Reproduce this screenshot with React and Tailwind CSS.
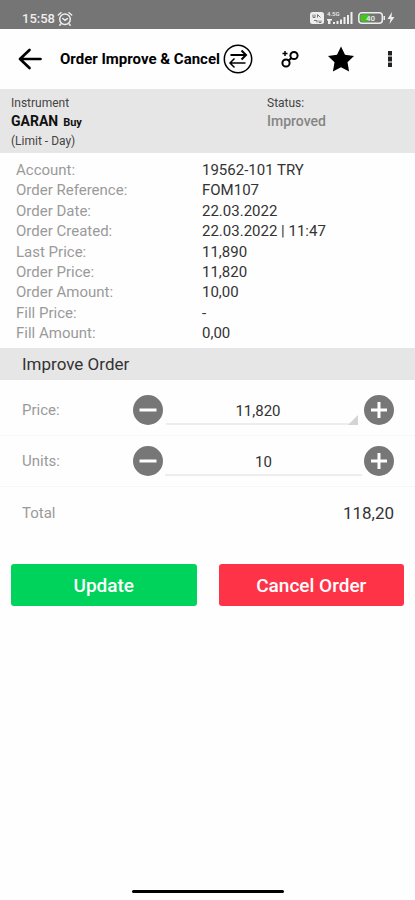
import { useState } from 'react';

const details = [
  ['Account:', '19562-101 TRY'],
  ['Order Reference:', 'FOM107'],
  ['Order Date:', '22.03.2022'],
  ['Order Created:', '22.03.2022 | 11:47'],
  ['Last Price:', '11,890'],
  ['Order Price:', '11,820'],
  ['Order Amount:', '10,00'],
  ['Fill Price:', '-'],
  ['Fill Amount:', '0,00'],
];

function StatusBar() {
  return (
    <div className="flex h-[29px] items-center justify-between bg-[#757575] pt-2 pr-5 pl-[22px] text-white">
      <div className="flex items-center gap-[2px] text-[13px] leading-4 font-medium text-[#eeeeee]">
        <span>15:58</span>
        <svg className="h-4 w-4" viewBox="0 0 16 16" fill="none" stroke="#eeeeee" strokeWidth="1.5" strokeLinecap="round" aria-hidden="true">
          <circle cx="8" cy="8.3" r="5.3" />
          <path d="M1.3 4 4 1.7M14.7 4 12 1.7M3.8 13l-1 1.2M12.2 13l1 1.2M5.8 7.5 8 9.3l2.4-1.6" />
        </svg>
      </div>
      <svg className="h-[15px] w-[85px]" viewBox="0 0 85 15" fill="#eeeeee" aria-hidden="true">
        <rect x="0" y="1" width="14" height="12" rx="2.5" />
        <g fill="none" stroke="#757575" strokeWidth="1">
          <path d="M3 3.5v3h2v-3M7.5 6.5v-3l3 3M4 9.5h3v2M9 9.5v2h2v-2" />
        </g>
        <text x="17" y="5" fontSize="6" fontWeight="500">4.5G</text>
        <path d="M17 8h5v1.5h-1.5V13H18V9.500h-1zM23 11h2v2h-2zM26.5 10h2v3h-2zM30 8.5h2V13h-2zM33.5 6h2v7h-2zM37 4h2v9h-2zM40.5 1h2v12h-2z" />
        <rect x="48.8" y="1.8" width="23.5" height="10.5" rx="3" fill="none" stroke="#eeeeee" strokeWidth="1.5" />
        <rect x="50.5" y="3.5" width="9" height="7" rx="1.5" fill="#45c51b" />
        <path d="M73.5 5H75v4h-1.500z" />
        <text x="56" y="10" fontSize="8" fontWeight="500">40</text>
        <path d="m82 1-4.500 7h3l-1 5 5-7h-3z" />
      </svg>
    </div>
  );
}

function Header() {
  return (
    <header className="flex h-[60px] items-center justify-between pr-[17px] pl-[18px] text-black">
      <div className="flex items-center">
        <button type="button" aria-label="Back" className="mr-[18px]">
          <svg className="h-6 w-6" viewBox="0 0 24 24" fill="none" stroke="currentColor" strokeWidth="2.7" strokeLinecap="round" strokeLinejoin="round">
            <path d="M22.5 12H2M11.5 3 2 12l9.5 9" />
          </svg>
        </button>
        <h1 className="text-[15px] leading-5 font-bold whitespace-nowrap">Order Improve &amp; Cancel</h1>
        <button type="button" aria-label="Switch" className="ml-[3px]">
          <svg className="h-[30px] w-[30px]" viewBox="0 0 30 30" fill="none" stroke="currentColor" strokeWidth="1.5">
            <circle cx="15" cy="15" r="13.7" />
            <path d="M7.5 11h15M18.5 6.500l4.500 4.500-4.500 4.500" strokeWidth="2" />
            <path d="M22.5 19h-15M11.5 14.500 7 19l4.500 4.500" />
          </svg>
        </button>
      </div>
      <button type="button" aria-label="Link order">
        <svg className="h-5 w-5" viewBox="0 0 20 20" fill="none" stroke="currentColor" strokeWidth="2">
          <circle cx="6" cy="14" r="3.6" />
          <circle cx="14" cy="6.5" r="3.6" />
          <path d="m8.500 11.500 3-2.500" />
          <path d="M5 2v5M2.500 4.500h5" strokeWidth="1.500" />
        </svg>
      </button>
      <button type="button" aria-label="Favourite">
        <svg className="h-[28px] w-[28px]" viewBox="0 0 28 28" fill="currentColor">
          <path d="m14 1.500 4 8.200 9 1.300-6.500 6.300L22.100 26.500 14 22.300l-8.100 4.200L7.500 17.300 1 11l9-1.300z" />
        </svg>
      </button>
      <button type="button" aria-label="More" className="px-[6px]">
        <svg className="h-[18px] w-[4px]" viewBox="0 0 4 18">
          <path d="M0 1h4v16H0z" fill="#999999" />
          <path d="M0 1h4v4H0zM0 7h4v4H0zM0 13h4v4H0z" fill="#222222" />
        </svg>
      </button>
    </header>
  );
}

function RoundButton({ label, plus, onClick }) {
  return (
    <button type="button" aria-label={label} onClick={onClick} className="shrink-0">
      <svg className="h-[30px] w-[30px]" viewBox="0 0 30 30">
        <circle cx="15" cy="15" r="15" fill="#777777" />
        <path d={plus ? 'M7 15h16M15 7v16' : 'M6.5 15h17'} stroke="#ffffff" strokeWidth="3" />
      </svg>
    </button>
  );
}

function Stepper({ id, label, value, onChange, step, corner }) {
  const change = (sign) => {
    const decimals = (value.split(',')[1] || '').length;
    const next = Number(value.replace(',', '.')) + sign * step;
    onChange(next.toFixed(decimals).replace('.', ','));
  };
  return (
    <div className="flex h-[51px] items-center border-b border-[#f7f7f7] pr-[21px] pl-[22px]">
      <label htmlFor={id} className="w-[111px] shrink-0 text-[15px] leading-5 text-[#9a9a9a]">{label}</label>
      <RoundButton label={`Decrease ${label}`} onClick={() => change(-1)} />
      <div className={corner ? 'relative mr-[6px] ml-[3px] min-w-0 flex-1' : 'relative mx-[2px] min-w-0 flex-1'}>
        <input
          id={id}
          value={value}
          onChange={(e) => onChange(e.target.value)}
          className={`block h-[30px] w-full border-b-2 border-[#ededed] bg-transparent pt-[3px] text-center text-[15px] text-[#333333] outline-none ${corner ? 'pr-2' : ''}`}
        />
        {corner && (
          <svg className="absolute right-0 bottom-0 h-[10px] w-[10px]" viewBox="0 0 10 10" aria-hidden="true">
            <path d="M10 0v10H0z" fill="#d4d4d4" />
          </svg>
        )}
      </div>
      <RoundButton label={`Increase ${label}`} plus onClick={() => change(1)} />
    </div>
  );
}

export default function App() {
  const [price, setPrice] = useState('11,820');
  const [units, setUnits] = useState('10');

  return (
    <div className="flex min-h-screen flex-col bg-[#fefefe] font-['Roboto','Liberation_Sans',sans-serif] text-[#333333]">
      <StatusBar />
      <Header />
      <main>
        <section className="grid h-16 grid-cols-[256px_1fr] bg-[#e6e6e6] pt-[5px] pl-[11px] text-[12px] leading-[18px] text-[#444444]">
          <div>
            <p>Instrument</p>
            <p className="font-bold text-[#111111]">
              <span className="text-[14px]">GARAN</span> <span className="ml-[2px] text-[11px]">Buy</span>
            </p>
            <p>(Limit - Day)</p>
          </div>
          <div>
            <p>Status:</p>
            <p className="text-[14px] font-medium text-[#858585]">Improved</p>
          </div>
        </section>

        <dl className="flex h-[195px] flex-col justify-between pt-[7px] pb-[5px] text-[15px] leading-5">
          {details.map(([name, value]) => (
            <div key={name} className="grid grid-cols-[186px_1fr] pl-4">
              <dt className="text-[#9a9a9a]">{name}</dt>
              <dd>{value}</dd>
            </div>
          ))}
        </dl>

        <h2 className="h-8 bg-[#e6e6e6] pl-[22px] text-[17px] leading-8">Improve Order</h2>

        <div className="pt-[5px]">
          <Stepper id="price" label="Price:" value={price} onChange={setPrice} step={0.01} corner />
          <Stepper id="units" label="Units:" value={units} onChange={setUnits} step={1} />
          <div className="flex h-[51px] items-center justify-between pr-[21px] pl-[22px]">
            <span className="text-[15px] leading-5 text-[#9a9a9a]">Total</span>
            <span className="text-[17px] leading-5">118,20</span>
          </div>
        </div>

        <div className="mt-[26px] grid grid-cols-2 gap-[22px] px-[11px] text-[19px] font-medium text-white">
          <button type="button" className="h-[42px] rounded-[3px] bg-[#00d35c] pt-[2px]">Update</button>
          <button type="button" className="h-[42px] rounded-[3px] bg-[#ff3348] pt-[2px]">Cancel Order</button>
        </div>
      </main>
      <div className="mx-auto mt-auto mb-[7px] h-[3px] w-[152px] rounded-full bg-black" />
    </div>
  );
}
